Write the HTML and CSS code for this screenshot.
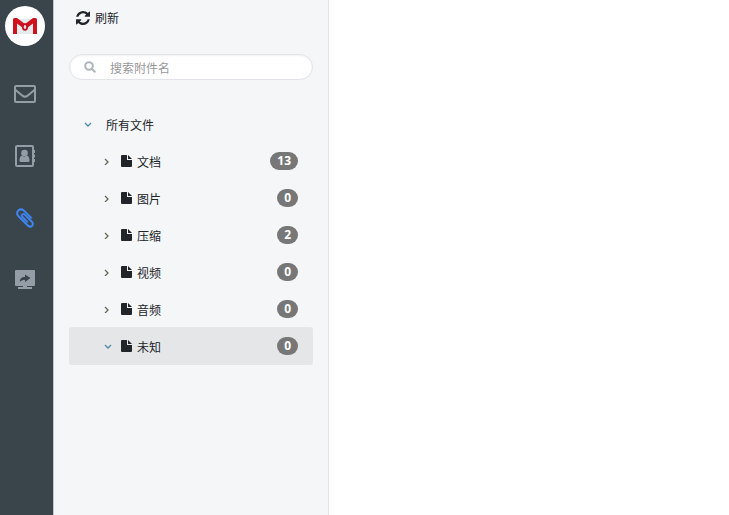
FILE: index.html
```
<!DOCTYPE html>
<html lang="zh-CN">
<head>
    <meta charset="UTF-8">
    <meta name="viewport" content="width=device-width, initial-scale=1.0">
    <title>附件</title>
    <link rel="stylesheet" href="styles.css">
</head>
<body>

    <nav class="sidebar">
        <a class="logo" href="#" aria-label="首页">
            <svg width="24" height="16" viewBox="0 0 24 16">
                <rect x="2" y="1" width="20" height="15" fill="#e6ebee"/>
                <path d="M0 16V1.500Q0 0 1.500 0H4l8 6L20 0h2.500Q24 0 24 1.500V16h-4V5.500L12 11.500 4 5.500V16z" fill="#d0121f"/>
                <ellipse cx="12" cy="9" rx="2.200" ry="2.800" fill="#f3dfe1" stroke="#c01020" stroke-width="1.800"/>
            </svg>
        </a>
        <a class="nav-link" href="#" aria-label="邮件">
            <svg width="22" height="18" viewBox="0 0 22 18" fill="none" stroke="currentColor" stroke-width="2">
                <rect x="1" y="1" width="20" height="16" rx="1"/>
                <path d="M1 4.500c2.500 2.200 5 4.200 7.300 6.100 1.900 1.500 3.500 1.500 5.400 0C16 8.700 18.500 6.700 21 4.500"/>
            </svg>
        </a>
        <a class="nav-link" href="#" aria-label="通讯录">
            <svg width="22" height="22" viewBox="0 0 22 22" fill="currentColor">
                <rect x="2" y="1" width="17" height="20" rx="1" fill="none" stroke="currentColor" stroke-width="2"/>
                <circle cx="10.500" cy="8" r="3.300"/>
                <path d="M5.500 15.500c0-3 1-4.800 2.700-5 1.500 1.200 3.100 1.200 4.600 0 1.700.2 2.700 2 2.700 5 0 1-.6 1.500-1.500 1.500H7c-.9 0-1.500-.5-1.500-1.500z"/>
                <path d="M19 5h2v3h-2zM19 9.500h2v3h-2zM19 14h2v3h-2z"/>
            </svg>
        </a>
        <a class="nav-link active" href="#" aria-label="附件">
            <svg width="20" height="22" viewBox="128 0 1536 1792" fill="currentColor" stroke="currentColor" stroke-width="40">
                <path d="M1596 1385q0 117-79 196t-196 79q-135 0-235-100l-777-776q-113-115-113-271 0-159 110-270t269-111q158 0 273 113l605 606q10 10 10 22 0 16-30.500 46.500t-46.500 30.500q-13 0-23-10l-606-607q-79-77-181-77-106 0-179 75t-73 181q0 105 76 181l776 777q63 63 145 63 64 0 106-42t42-106q0-82-63-145l-581-581q-26-24-60-24-29 0-48 19t-19 48q0 32 25 59l410 410q10 10 10 22 0 16-31 47t-47 31q-12 0-22-10l-410-410q-63-61-63-149 0-82 57-139t139-57q88 0 149 63l581 581q100 98 100 235z"/>
            </svg>
        </a>
        <a class="nav-link" href="#" aria-label="共享">
            <svg width="20" height="20" viewBox="0 0 20 20" fill="currentColor">
                <path fill-rule="evenodd" d="M1 0h18q1 0 1 1v14q0 1-1 1H1q-1 0-1-1V1q0-1 1-1zM5 12c1-1.600 2.500-2 5-2v2l5.500-4L10 4.500V7c-3.500 0-5.300 1.800-5 5z"/>
                <path d="M8 16h4v1h5v2H3v-2h5z"/>
            </svg>
        </a>
    </nav>

    <aside class="panel">
        <button class="refresh" type="button">
            <svg width="14" height="14" viewBox="128 128 1536 1536" fill="currentColor">
                <path d="M1639 1056q0 5-1 7-64 268-268 434.500t-478 166.500q-146 0-282.500-55t-243.500-157l-129 129q-19 19-45 19t-45-19-19-45v-448q0-26 19-45t45-19h448q26 0 45 19t19 45-19 45l-137 137q71 66 161 102t187 36q134 0 250-65t186-179q11-17 53-117 8-23 30-23h192q13 0 22.500 9.500t9.500 22.500zm25-800v448q0 26-19 45t-45 19h-448q-26 0-45-19t-19-45 19-45l138-138q-148-137-349-137-134 0-250 65t-186 179q-11 17-53 117-8 23-30 23h-199q-13 0-22.500-9.500t-9.500-22.500v-7q65-268 270-434.500t480-166.500q146 0 284 55.500t245 156.500l130-129q19-19 45-19t45 19 19 45z"/>
            </svg>
            刷新
        </button>

        <label class="search">
            <svg width="12" height="12" viewBox="0 0 12 12" fill="none" stroke="currentColor" stroke-width="2">
                <circle cx="5" cy="5" r="3.800"/>
                <path d="M7.800 7.800l3 3" stroke-linecap="round"/>
            </svg>
            <input type="text" placeholder="搜索附件名" aria-label="搜索附件名">
        </label>

        <ul class="tree">
            <li>
                <button class="row root" type="button">
                    <svg class="arrow open" viewBox="0 0 8 8"><path d="M1 3l3 3 3-3"/></svg>
                    <span class="name">所有文件</span>
                </button>
            </li>
            <li>
                <button class="row" type="button">
                    <svg class="arrow" viewBox="0 0 8 8"><path d="M1 2l3 3-3 3"/></svg>
                    <svg class="file" viewBox="0 0 11 12"><path d="M0 1q0-1 1-1h5v5h5v6q0 1-1 1H1q-1 0-1-1zM7 0l4 4H7z"/></svg>
                    <span class="name">文档</span>
                    <span class="badge">13</span>
                </button>
            </li>
            <li>
                <button class="row" type="button">
                    <svg class="arrow" viewBox="0 0 8 8"><path d="M1 2l3 3-3 3"/></svg>
                    <svg class="file" viewBox="0 0 11 12"><path d="M0 1q0-1 1-1h5v5h5v6q0 1-1 1H1q-1 0-1-1zM7 0l4 4H7z"/></svg>
                    <span class="name">图片</span>
                    <span class="badge">0</span>
                </button>
            </li>
            <li>
                <button class="row" type="button">
                    <svg class="arrow" viewBox="0 0 8 8"><path d="M1 2l3 3-3 3"/></svg>
                    <svg class="file" viewBox="0 0 11 12"><path d="M0 1q0-1 1-1h5v5h5v6q0 1-1 1H1q-1 0-1-1zM7 0l4 4H7z"/></svg>
                    <span class="name">压缩</span>
                    <span class="badge">2</span>
                </button>
            </li>
            <li>
                <button class="row" type="button">
                    <svg class="arrow" viewBox="0 0 8 8"><path d="M1 2l3 3-3 3"/></svg>
                    <svg class="file" viewBox="0 0 11 12"><path d="M0 1q0-1 1-1h5v5h5v6q0 1-1 1H1q-1 0-1-1zM7 0l4 4H7z"/></svg>
                    <span class="name">视频</span>
                    <span class="badge">0</span>
                </button>
            </li>
            <li>
                <button class="row" type="button">
                    <svg class="arrow" viewBox="0 0 8 8"><path d="M1 2l3 3-3 3"/></svg>
                    <svg class="file" viewBox="0 0 11 12"><path d="M0 1q0-1 1-1h5v5h5v6q0 1-1 1H1q-1 0-1-1zM7 0l4 4H7z"/></svg>
                    <span class="name">音频</span>
                    <span class="badge">0</span>
                </button>
            </li>
            <li>
                <button class="row selected" type="button">
                    <svg class="arrow open" viewBox="0 0 8 8"><path d="M1 3l3 3 3-3"/></svg>
                    <svg class="file" viewBox="0 0 11 12"><path d="M0 1q0-1 1-1h5v5h5v6q0 1-1 1H1q-1 0-1-1zM7 0l4 4H7z"/></svg>
                    <span class="name">未知</span>
                    <span class="badge">0</span>
                </button>
            </li>
        </ul>
    </aside>

    <main class="content"></main>

</body>
</html>
```

FILE: styles.css
```
* {
    box-sizing: border-box;
}

body {
    display: flex;
    min-height: 100vh;
    margin: 0;
    background-color: #fff;
    color: #212529;
    font-family: "Open Sans", "Noto Sans CJK SC", sans-serif;
    font-size: 12px;
}

button {
    border: none;
    background: none;
    color: inherit;
    font: inherit;
    cursor: pointer;
}

svg {
    display: block;
    flex: none;
}

/* Barre de navigation */
.sidebar {
    display: flex;
    flex: none;
    flex-direction: column;
    align-items: center;
    width: 54px;
    padding: 6px 3px 0 0;
    background-color: #39454a;
    border-right: 1px solid #c3c7c9;
}

.logo {
    display: flex;
    align-items: center;
    justify-content: center;
    width: 40px;
    height: 40px;
    margin-bottom: 17px;
    border-radius: 50%;
    background-color: #fff;
}

.nav-link {
    display: flex;
    align-items: center;
    justify-content: center;
    width: 40px;
    height: 62px;
    color: #949ca5;
}

.nav-link.active {
    color: #3f87f5;
}

/* Panneau des fichiers */
.panel {
    flex: none;
    width: 275px;
    padding: 8px 15px;
    background-color: #f4f6f8;
    border-right: 1px solid #e2e4e7;
}

.refresh {
    display: flex;
    align-items: center;
    gap: 5px;
    height: 20px;
    padding: 0 7px;
}

.search {
    display: flex;
    align-items: center;
    gap: 14px;
    height: 26px;
    margin-top: 26px;
    padding: 0 14px;
    border: 1px solid #e2e4e9;
    border-radius: 13px;
    background-color: #fff;
    box-shadow: inset 0 1px 2px rgba(0, 0, 0, 0.06);
    color: #b0b5bb;
}

.search input {
    flex: 1;
    min-width: 0;
    padding: 2px 0 0;
    border: none;
    outline: none;
    background: none;
    color: #212529;
    font: inherit;
}

.search input::placeholder {
    color: #999;
}

.tree {
    margin: 26px 0 0;
    padding: 0;
    list-style: none;
}

.tree li {
    margin-top: -1px;
}

.row {
    display: flex;
    align-items: center;
    width: 100%;
    height: 38px;
    padding: 0 15px 0 35px;
    border-radius: 3px;
    text-align: left;
}

.row.root {
    padding-left: 15px;
}

.row.selected {
    background-color: #e5e6e8;
}

.arrow {
    width: 8px;
    height: 8px;
    margin-right: 9px;
    fill: none;
    stroke: #6b6558;
    stroke-width: 1.3;
}

.arrow.open {
    stroke: #4a8ba8;
}

.root .arrow {
    margin-right: 14px;
}

.file {
    width: 11px;
    height: 12px;
    margin-right: 5px;
    fill: #212529;
}

.name {
    flex: 1;
    padding-top: 2px;
}

.badge {
    height: 18px;
    padding: 0 7px;
    border-radius: 9px;
    background-color: #777;
    color: #fff;
    font-weight: bold;
    line-height: 18px;
}
```
